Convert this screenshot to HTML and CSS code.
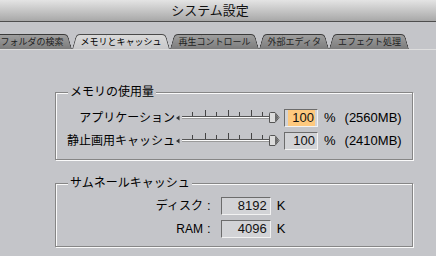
FILE: index.html
```html
<!DOCTYPE html>
<html lang="ja">
<head>
    <meta charset="UTF-8" />
    <title>システム設定</title>
    <link rel="stylesheet" href="styles.css">
</head>
<body>
    <div class="titlebar"><span class="title">システム設定</span></div>

    <div class="tabs">
        <div class="tab tab-first">フォルダの検索</div>
        <div class="tab tab-active">メモリとキャッシュ</div>
        <div class="tab">再生コントロール</div>
        <div class="tab">外部エディタ</div>
        <div class="tab">エフェクト処理</div>
    </div>

    <div class="pane">
        <fieldset class="group group-memory">
            <legend>メモリの使用量</legend>
            <div class="row">
                <span class="label">アプリケーション</span>
                <svg class="slider" width="105" height="15" viewBox="0 0 105 15">
                    <polygon points="1,8 4.5,5.5 4.5,10.5" fill="#333" />
                    <rect x="7" y="6" width="88" height="1" fill="#555" />
                    <rect x="7" y="7" width="88" height="1" fill="#fafafa" />
                    <rect x="7" y="8" width="88" height="1" fill="#9a9a9a" />
                    <g fill="#444">
                        <rect x="17" y="2" width="1" height="4" />
                        <rect x="30" y="0" width="1" height="6" />
                        <rect x="41" y="2" width="1" height="4" />
                        <rect x="53" y="0" width="1" height="6" />
                        <rect x="64" y="2" width="1" height="4" />
                        <rect x="76" y="0" width="1" height="6" />
                        <rect x="87" y="2" width="1" height="4" />
                    </g>
                    <path d="M94.5,3.5 Q94.5,2.5 95.5,2.5 L100,2.5 L104,7.5 L100,12.5 L94.5,12.5 Z" fill="#dcdcdc" stroke="#555" />
                    <path d="M100,3 L103.4,7.5 L100,12 Z" fill="#6a6a6a" />
                </svg>
                <span class="field field-pct"><span class="selected">100</span></span>
                <span class="unit">%</span>
                <span class="size">(2560MB)</span>
            </div>
            <div class="row">
                <span class="label">静止画用キャッシュ</span>
                <svg class="slider" width="105" height="15" viewBox="0 0 105 15">
                    <polygon points="1,8 4.5,5.5 4.5,10.5" fill="#333" />
                    <rect x="7" y="6" width="88" height="1" fill="#555" />
                    <rect x="7" y="7" width="88" height="1" fill="#fafafa" />
                    <rect x="7" y="8" width="88" height="1" fill="#9a9a9a" />
                    <g fill="#444">
                        <rect x="17" y="2" width="1" height="4" />
                        <rect x="30" y="0" width="1" height="6" />
                        <rect x="41" y="2" width="1" height="4" />
                        <rect x="53" y="0" width="1" height="6" />
                        <rect x="64" y="2" width="1" height="4" />
                        <rect x="76" y="0" width="1" height="6" />
                        <rect x="87" y="2" width="1" height="4" />
                    </g>
                    <path d="M94.5,3.5 Q94.5,2.5 95.5,2.5 L100,2.5 L104,7.5 L100,12.5 L94.5,12.5 Z" fill="#dcdcdc" stroke="#555" />
                    <path d="M100,3 L103.4,7.5 L100,12 Z" fill="#6a6a6a" />
                </svg>
                <span class="field field-pct">100</span>
                <span class="unit">%</span>
                <span class="size">(2410MB)</span>
            </div>
        </fieldset>

        <fieldset class="group group-thumb">
            <legend>サムネールキャッシュ</legend>
            <div class="row">
                <span class="label label-wide">ディスク</span>
                <span class="colon">:</span>
                <span class="field field-k">8192</span>
                <span class="unit unit-k">K</span>
            </div>
            <div class="row">
                <span class="label label-wide">RAM</span>
                <span class="colon">:</span>
                <span class="field field-k">4096</span>
                <span class="unit unit-k">K</span>
            </div>
        </fieldset>
    </div>
</body>
</html>
```

FILE: styles.css
```css
/* Base */
* {
    box-sizing: border-box;
    margin: 0;
    padding: 0;
}

body {
    width: 436px;
    height: 256px;
    overflow: hidden;
    background: #c4c5c9;
    font-family: "Liberation Sans", "Noto Sans CJK JP", sans-serif;
    color: #000;
}

/* Window title */
.titlebar {
    height: 22px;
    padding-right: 16px;
    background: linear-gradient(#e4e4e4, #a8a8a8);
    border-bottom: 1px solid #4e4e4e;
    text-align: center;
    font-size: 13px;
    line-height: 21px;
    color: #111;
}

/* Tab strip */
.tabs {
    display: flex;
    margin-top: 12px;
    height: 15px;
}

.tab {
    position: relative;
    z-index: 1;
    padding: 0 8.5px;
    height: 15px;
    font-size: 9px;
    line-height: 16px;
    color: #1e1e1e;
    white-space: nowrap;
}

.tab::before,
.tab::after {
    content: "";
    position: absolute;
    top: 0;
    bottom: 0;
    width: 60%;
    z-index: -1;
    background: linear-gradient(#9e9e9e, #7c7c7c);
    border-top: 1px solid #3a3a3a;
}

.tab::before {
    left: 0;
    border-left: 1px solid #3a3a3a;
    border-top-left-radius: 4px;
    transform: skewX(-16deg);
    transform-origin: bottom left;
}

.tab::after {
    right: 0;
    border-right: 1px solid #3a3a3a;
    border-top-right-radius: 4px;
    transform: skewX(16deg);
    transform-origin: bottom right;
}

.tab-first {
    margin-left: -8px;
}

.tab-active {
    z-index: 2;
    color: #000;
}

.tab-active::before,
.tab-active::after {
    background: linear-gradient(#dadada, #c8c8ca);
    border-color: #4a4a4a;
}

/* Panel */
.pane {
    border-top: 1px solid #dedede;
}

.group {
    width: 358px;
    margin-left: 55px;
    border: 1px solid #868686;
    box-shadow: inset 1px 1px 0 #fafafa, 1px 1px 0 #fafafa;
}

.group legend {
    margin-left: 12px;
    padding: 0 2px;
    background: #c4c5c9;
    font-size: 12px;
    line-height: 14px;
}

.group-memory {
    margin-top: 35px;
    padding: 7px 0 7px;
}

.group-thumb {
    margin-top: 16px;
    padding: 4px 0 6px;
}

.row {
    display: flex;
    align-items: center;
    height: 23px;
    font-size: 12px;
}

.label {
    width: 119px;
    text-align: right;
    line-height: 14px;
    white-space: nowrap;
}

.label-wide {
    width: 147px;
}

.colon {
    margin-left: 4px;
    font-size: 13px;
}

.field {
    height: 18px;
    padding-right: 2px;
    background: #d2d3d6;
    border-top: 1px solid #6c6c6c;
    border-left: 1px solid #6c6c6c;
    border-bottom: 1px solid #f2f2f2;
    border-right: 1px solid #f2f2f2;
    text-align: right;
    font-size: 13px;
    line-height: 16px;
    color: #111;
}

.field-pct {
    width: 34px;
    margin-left: 4px;
}

.field-k {
    width: 50px;
    margin-left: 10px;
    padding-right: 3px;
}

.selected {
    display: inline-block;
    padding: 0 1px 0 4px;
    background: #fec97e;
}

.unit {
    margin-left: 6px;
    font-size: 13px;
}

.size {
    margin-left: 9px;
    font-size: 13px;
}
```
